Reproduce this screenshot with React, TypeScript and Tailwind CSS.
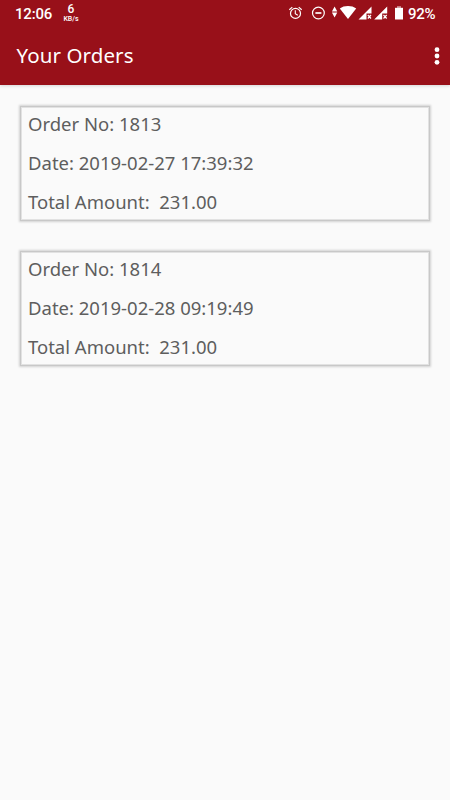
import React from "react";

const orders = [
  { no: "1813", date: "2019-02-27 17:39:32", total: "231.00" },
  { no: "1814", date: "2019-02-28 09:19:49", total: "231.00" },
];

function StatusIcons() {
  return (
    <svg width="120" height="28" viewBox="286 0 120 28" fill="none" className="block">
      <g stroke="#fff" strokeWidth="1.2">
        <circle cx="295.5" cy="13.4" r="5" />
        <path d="M295.3 10.2v3.6l2.5 1.5" strokeWidth="1.1" />
        <path d="M289.3 9.7l3-2.6M301.7 9.7l-3-2.6" />
        <circle cx="318.4" cy="13" r="5.9" />
        <path d="M315.4 13h6" strokeWidth="1.7" />
      </g>
      <g fill="#fff">
        <path d="M334.6 6.4l2.7 5h-5.4zM334.6 17.6l2.7-5h-5.4z" />
        <path d="M339.8 8.6c2.2-1.7 5-2.5 8.200-2.500s6 .8 8.200 2.500L348 19z" />
        <path d="M371.500 6.500v7h-5v6h-8z" />
        <path d="M387.200 6.500v7h-5v6h-8z" />
        <path d="M397 6.300h4v1.500h-4z" fillOpacity=".65" />
        <path d="M395 7.800h8v11.700h-8z" />
      </g>
      <path d="M367.800 15l3.200 3.500M371 15l-3.200 3.500M383.500 15l3.200 3.500M386.700 15l-3.200 3.500" stroke="#fff" strokeWidth="1.2" />
    </svg>
  );
}

function Header() {
  return (
    <header className="relative h-[85px] bg-[#981019] text-white shadow-[0_1px_3px_rgba(0,0,0,0.15)]">
      <div className="flex h-7 items-center pl-[15px] font-[Roboto,sans-serif] font-medium">
        <span className="w-[37px] text-[15px] leading-7 tracking-[-0.2px]">12:06</span>
        <div className="ml-[9px] flex w-5 flex-col items-center pb-px">
          <span className="text-[12px] leading-[11px]">6</span>
          <span className="text-[7px] leading-[8px] whitespace-nowrap">KB/s</span>
        </div>
        <div className="ml-[205px] shrink-0">
          <StatusIcons />
        </div>
        <span className="ml-[2px] text-[15px] leading-7 tracking-[-0.3px]">92%</span>
      </div>
      <div className="flex h-[57px] items-center justify-between pr-[10px] pl-[16.5px]">
        <h1 className="pb-[2px] font-['Noto_Sans',sans-serif] text-[20.5px] leading-[53px] tracking-[0.1px]">Your Orders</h1>
        <svg width="6" height="20" viewBox="0 0 6 20" fill="#fff" className="mb-[2px]">
          <circle cx="3" cy="3.7" r="2.4" />
          <circle cx="3" cy="10" r="2.4" />
          <circle cx="3" cy="16.3" r="2.4" />
        </svg>
      </div>
    </header>
  );
}

export default function App() {
  return (
    <div className="h-[800px] w-[450px] overflow-hidden bg-[#fafafa]">
      <Header />
      <main className="flex flex-col gap-[30px] px-5 pt-[21px]">
        {orders.map((o) => (
          <section
            key={o.no}
            className="h-[115px] border border-[#c8c8c8] pl-[7px] font-['Noto_Sans',sans-serif] text-[18.5px] leading-[39px] whitespace-pre text-[#5e5e5e] shadow-[0_0_2px_1px_rgba(0,0,0,0.16),inset_0_0_0_1px_#e2e2e2]"
          >
            <div className="-mt-[3px]">Order No: {o.no}</div>
            <div>Date: {o.date}</div>
            <div>Total Amount:  {o.total}</div>
          </section>
        ))}
      </main>
    </div>
  );
}
